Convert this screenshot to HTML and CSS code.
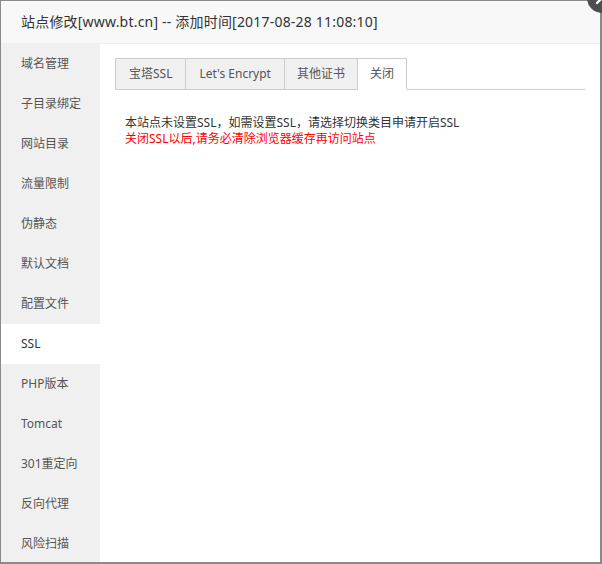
FILE: index.html
```html
<!DOCTYPE html>
<html lang="zh-CN">
<head>
<meta charset="utf-8">
<title>站点修改</title>
<link rel="stylesheet" href="styles.css">
</head>
<body>
<div class="dialog">
  <div class="dialog-title">站点修改[www.bt.cn] -- 添加时间[2017-08-28 11:08:10]</div>
  <div class="dialog-body">
    <ul class="side-menu">
      <li>域名管理</li>
      <li>子目录绑定</li>
      <li>网站目录</li>
      <li>流量限制</li>
      <li>伪静态</li>
      <li>默认文档</li>
      <li>配置文件</li>
      <li class="active">SSL</li>
      <li>PHP版本</li>
      <li>Tomcat</li>
      <li>301重定向</li>
      <li>反向代理</li>
      <li>风险扫描</li>
    </ul>
    <div class="content">
      <div class="tabs">
        <span class="tab latin">宝塔SSL</span>
        <span class="tab latin">Let's Encrypt</span>
        <span class="tab">其他证书</span>
        <span class="tab active">关闭</span>
      </div>
      <div class="notes">
        <p class="note">本站点未设置SSL，如需设置SSL，请选择切换类目申请开启SSL</p>
        <p class="note warn">关闭SSL以后,请务必清除浏览器缓存再访问站点</p>
      </div>
    </div>
  </div>
  <span class="close-btn" aria-label="关闭">
    <svg width="30" height="30" viewBox="0 0 30 30"><circle cx="15" cy="15" r="15" fill="#4e4e4e"/><path d="M10 10 L20 20 M20 10 L10 20" stroke="#fff" stroke-width="2.4" stroke-linecap="round"/></svg>
  </span>
</div>
</body>
</html>
```
FILE: styles.css
```css
* { box-sizing: border-box; }
html, body { margin: 0; padding: 0; background: #fff; }
body {
  font-family: "Noto Sans", "Noto Sans CJK SC", sans-serif;
  overflow: hidden;
}
.dialog {
  position: relative;
  width: 602px;
  height: 564px;
  border: 1px solid #8a8a8a;
  border-right-width: 2px;
  border-bottom-width: 2px;
  display: flex;
  flex-direction: column;
  background: #fff;
}
.dialog-title {
  height: 43px;
  line-height: 42px;
  padding-left: 20px;
  font-size: 14px;
  letter-spacing: 0.2px;
  color: #333;
  background: #f8f8f8;
  border-bottom: 1px solid #eee;
  white-space: nowrap;
}
.dialog-body {
  flex: 1;
  display: flex;
  min-height: 0;
  overflow: hidden;
}
.side-menu {
  list-style: none;
  margin: 0;
  padding: 0;
  width: 99px;
  background: #f0f0f0;
  flex: none;
}
.side-menu li {
  height: 40px;
  line-height: 40px;
  padding-left: 20px;
  font-size: 12px;
  color: #555;
}
.side-menu li.active {
  background: #fff;
  color: #333;
}
.content {
  flex: 1;
  padding: 14px 15px 0 15px;
}
.tabs {
  display: flex;
  height: 32px;
  border-bottom: 1px solid #ccc;
}
.tab {
  height: 32px;
  line-height: 30px;
  padding: 0 12px;
  font-size: 12px;
  color: #555;
  background: #f0f0f0;
  border: 1px solid #ccc;
  border-left: none;
  margin-bottom: -1px;
}
.tab.latin { padding: 0 13px; }
.tab:first-child { border-left: 1px solid #ccc; }
.tab.active {
  background: #fff;
  border-bottom-color: #fff;
}
.notes {
  padding: 25px 10px 0 10px;
}
.note {
  margin: 0;
  font-size: 12px;
  line-height: 16px;
  color: #333;
}
.note.warn { color: #f00; }
.close-btn {
  position: absolute;
  right: -17px;
  top: -18px;
  width: 30px;
  height: 30px;
}
.close-btn svg { display: block; }
```
